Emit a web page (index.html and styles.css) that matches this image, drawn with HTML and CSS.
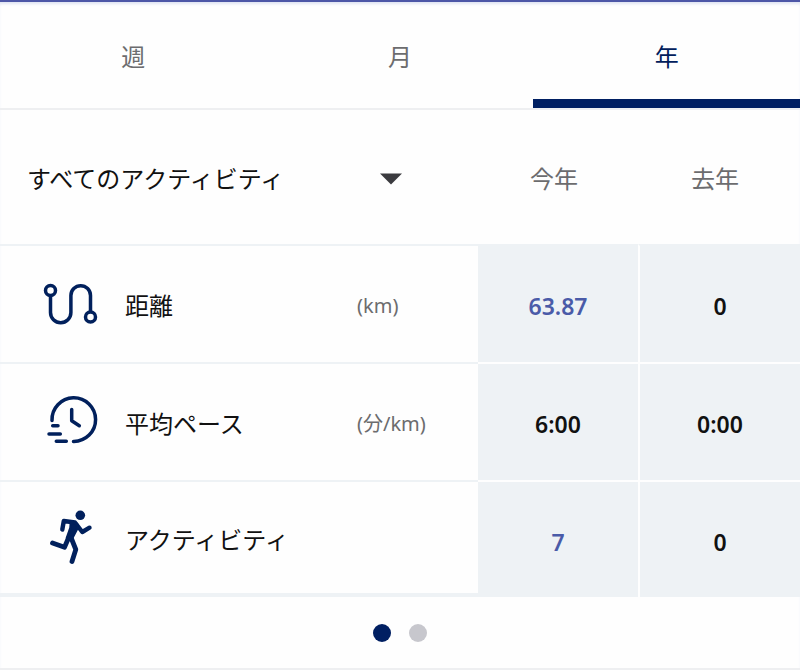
FILE: index.html
```html
<!DOCTYPE html>
<html lang="ja">
<head>
<meta charset="utf-8">
<meta name="viewport" content="width=device-width, initial-scale=1">
<title>アクティビティ</title>
<link rel="stylesheet" href="styles.css">
</head>
<body>
<main class="summary">
  <div class="tabs" role="tablist">
    <button class="tab" type="button" role="tab" aria-selected="false">週</button>
    <button class="tab" type="button" role="tab" aria-selected="false">月</button>
    <button class="tab tab-active" type="button" role="tab" aria-selected="true">年</button>
  </div>
  <table class="stats">
    <colgroup>
      <col class="col-name">
      <col class="col-current">
      <col class="col-previous">
    </colgroup>
    <thead>
      <tr>
        <td class="filter-cell">
          <div class="filter">
            <select class="filter-select" aria-label="すべてのアクティビティ">
              <option>すべてのアクティビティ</option>
            </select>
            <svg class="filter-arrow" viewBox="0 0 22 12" aria-hidden="true"><path d="M0 0.5H22L11 11.5Z" fill="#3b3b3f"/></svg>
          </div>
        </td>
        <th class="period" scope="col">今年</th>
        <th class="period" scope="col">去年</th>
      </tr>
    </thead>
    <tbody>
      <tr>
        <th class="metric" scope="row">
          <div class="metric-row">
            <svg class="icon" viewBox="0 -1 56 60" fill="none" stroke="#01205c" stroke-width="3.5" aria-hidden="true">
              <circle cx="7.5" cy="13.5" r="5"/>
              <circle cx="47.5" cy="40" r="5"/>
              <path d="M7.5 18.500V35.500a10.200 10.200 0 0 0 20.400 0V18.500a9.800 9.800 0 0 1 19.600 0V35"/>
            </svg>
            <span class="name">距離</span>
            <span class="unit">(km)</span>
          </div>
        </th>
        <td class="value value-accent">63.87</td>
        <td class="value">0</td>
      </tr>
      <tr>
        <th class="metric" scope="row">
          <div class="metric-row">
            <svg class="icon" viewBox="0 -1 56 60" fill="none" stroke="#01205c" stroke-width="3.5" stroke-linecap="round" stroke-linejoin="round" aria-hidden="true">
              <path d="M9 25.500A21.800 21.800 0 1 1 30.500 46.400"/>
              <path d="M28.700 14.500V25.700L36.300 30.700"/>
              <path d="M9.700 30.700H15M6 39H17.300M13.300 46.300H23.300"/>
            </svg>
            <span class="name">平均ペース</span>
            <span class="unit">(分/km)</span>
          </div>
        </th>
        <td class="value">6:00</td>
        <td class="value">0:00</td>
      </tr>
      <tr>
        <th class="metric" scope="row">
          <div class="metric-row">
            <svg class="icon" viewBox="0 0 56 60" fill="none" stroke="#01205c" stroke-linecap="round" stroke-linejoin="round" aria-hidden="true">
              <circle cx="37.300" cy="5.300" r="4.800" fill="#01205c" stroke="none"/>
              <path d="M19.300 19.500L20.800 11L32 12.500L39.300 22L46.500 17.700" stroke-width="4.400"/>
              <path d="M28 11.500L34 14L34.500 18L29.500 27.500L24 28L27.500 18Z" fill="#01205c" stroke-width="2.600"/>
              <path d="M25.500 28L21.500 37.300L9.500 33M28 27.500L32.800 39.500L29 51.500" stroke-width="4.800"/>
            </svg>
            <span class="name">アクティビティ</span>
          </div>
        </th>
        <td class="value value-accent">7</td>
        <td class="value">0</td>
      </tr>
    </tbody>
  </table>
  <nav class="pager">
    <button class="dot dot-active" type="button" aria-label="1"></button>
    <button class="dot" type="button" aria-label="2"></button>
  </nav>
</main>
</body>
</html>
```
FILE: styles.css
```css
* {
  box-sizing: border-box;
}

body {
  margin: 0;
  background: #fefefe;
  color: #111;
  font-family: "Noto Sans", "Noto Sans CJK JP", sans-serif;
  font-size: 24px;
  line-height: 32px;
}

.summary {
  border-top: 2px solid #4d57a7;
  border-bottom: 2px solid #eeeff1;
  box-shadow: inset 0 3px 3px -1px #dfe4f3;
}

button,
select {
  padding: 0;
  border: 0;
  background: transparent;
  color: inherit;
  font: inherit;
}

.tabs {
  display: grid;
  grid-template-columns: repeat(3, 1fr);
  border-bottom: 2px solid #eeeff1;
}

.tab {
  height: 106px;
  padding-top: 12px;
  border-bottom: 9px solid transparent;
  color: #6c6c6e;
}

.tab-active {
  border-bottom-color: #001f62;
  color: #01205c;
}

.stats {
  width: 100%;
  table-layout: fixed;
  border-collapse: separate;
  border-spacing: 0;
}

.stats th,
.stats td {
  padding: 0;
  font-weight: 400;
}

.col-name {
  width: 59.75%;
}

.col-current {
  width: 20%;
}

.col-previous {
  width: 20.25%;
}

.stats .filter-cell {
  height: 134px;
  padding: 4px 76px 0 27px;
}

.filter {
  display: grid;
  align-items: center;
}

.filter-select {
  grid-area: 1 / 1;
  width: 100%;
  appearance: none;
}

.filter-arrow {
  grid-area: 1 / 1;
  justify-self: end;
  width: 22px;
  height: 12px;
  pointer-events: none;
}

.stats .period {
  padding: 4px 8px 0 0;
  color: #6c6c6e;
}

.stats .metric {
  height: 118px;
  border-top: 2px solid #eef2f5;
  text-align: left;
}

.stats tbody tr:last-child .metric {
  height: 117px;
  border-bottom: 4px solid #eef2f5;
}

.metric-row {
  display: grid;
  grid-template-columns: 56px 1fr 121px;
  column-gap: 26px;
  align-items: center;
  padding: 4px 0 0 43px;
}

.icon {
  width: 56px;
  height: 60px;
}

.unit {
  color: #6c6c6e;
  font-size: 20px;
}

.stats .value {
  padding-top: 4px;
  border-top: 2px solid #fefefe;
  background: #eef2f5;
  text-align: center;
  font-size: 23px;
  font-weight: 600;
}

.stats tbody tr:first-child .value {
  border-top-color: #eef2f5;
}

.stats .value:last-child {
  border-left: 2px solid #fefefe;
}

.stats .value-accent {
  color: #4a5ba8;
}

.pager {
  display: flex;
  justify-content: center;
  gap: 18px;
  padding: 27px 0 26px;
}

.dot {
  width: 18px;
  height: 18px;
  border-radius: 50%;
  background: #c7c7cd;
}

.dot-active {
  background: #001f62;
}
```
